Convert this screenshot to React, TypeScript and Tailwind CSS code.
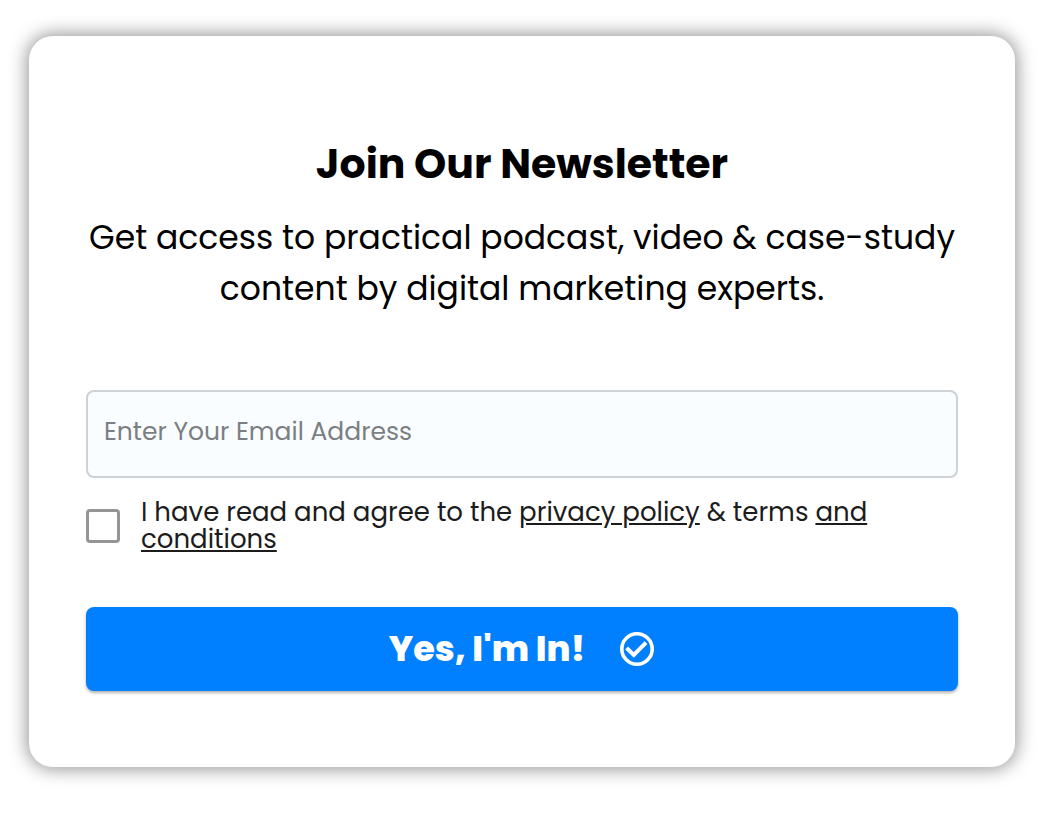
import { useState } from "react";
import type { FormEvent } from "react";

/** Tick inside a ring, shown after the submit label. */
function CheckRing() {
  return (
    <svg viewBox="0 0 36 36" className="h-9 w-9 flex-shrink-0" fill="none" stroke="currentColor" aria-hidden="true">
      <circle cx="18" cy="18" r="15.2" strokeWidth="3.6" />
      <path d="M7.6 17 14.8 24 27 11.6" strokeWidth="4" />
    </svg>
  );
}

export default function App() {
  const [email, setEmail] = useState("");
  const [agreed, setAgreed] = useState(false);

  const handleSubmit = (e: FormEvent) => e.preventDefault();

  return (
    <main className="min-h-screen bg-white pt-9 pr-[25px] pb-12 pl-[29px] font-['Poppins','Inter',sans-serif] text-black">
      <section className="rounded-3xl bg-white px-[57px] pt-[104px] pb-[76px] shadow-[0_0_18px_2px_rgba(0,0,0,0.42)]">
        <h1 className="text-center text-[41px] leading-12 font-bold">Join Our Newsletter</h1>
        <p className="mt-6 text-center text-[33px] leading-[51px]">
          Get access to practical podcast, video &amp; case-study content by digital marketing experts.
        </p>

        <form onSubmit={handleSubmit} className="mt-[76px]">
          <input
            type="email"
            aria-label="Email address"
            placeholder="Enter Your Email Address"
            value={email}
            onChange={(e) => setEmail(e.target.value)}
            className="block h-[88px] w-full rounded-lg border-2 border-[#ccd2d6] bg-[#f9fdff] px-4 pb-1 text-[25px] placeholder:text-[#7b7f82]"
          />

          <div className="mt-[21px] flex items-center gap-[21px]">
            <input
              id="agree"
              type="checkbox"
              checked={agreed}
              onChange={(e) => setAgreed(e.target.checked)}
              className="h-[34px] w-[34px] flex-shrink-0 appearance-none rounded-sm border-3 border-[#959595] bg-white checked:bg-[#007fff]"
            />
            <label htmlFor="agree" className="text-[26px] leading-[27px] text-[#1c1c1c]">
              I have read and agree to the{" "}
              <a href="#privacy" className="underline">privacy policy</a> &amp; terms{" "}
              <a href="#terms" className="underline">and conditions</a>
            </label>
          </div>

          <button
            type="submit"
            className="mt-[54px] flex h-[84px] w-full items-center justify-center gap-[34px] rounded-lg bg-[#007fff] text-[35px] font-extrabold text-white shadow-[0_2px_3px_rgba(0,0,0,0.3)]"
          >
            Yes, I'm In!
            <CheckRing />
          </button>
        </form>
      </section>
    </main>
  );
}
